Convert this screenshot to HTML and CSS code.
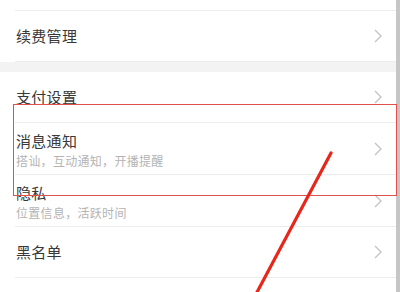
FILE: index.html
```html
<!DOCTYPE html>
<html lang="zh">
<head>
<meta charset="utf-8">
<link rel="stylesheet" href="styles.css">
</head>
<body>
<div class="screen">
  <div class="list">
    <div class="top-stub"></div>
    <div class="group">
      <div class="row"><span class="title">续费管理</span><svg class="chev" viewBox="0 0 8 14"><polyline points="1,1 7,7 1,13"/></svg></div>
    </div>
    <div class="gap"></div>
    <div class="group">
      <div class="row"><span class="title">支付设置</span><svg class="chev" viewBox="0 0 8 14"><polyline points="1,1 7,7 1,13"/></svg></div>
      <div class="row two"><div class="texts"><span class="title">消息通知</span><span class="sub">搭讪，互动通知，开播提醒</span></div><svg class="chev" viewBox="0 0 8 14"><polyline points="1,1 7,7 1,13"/></svg></div>
      <div class="row two"><div class="texts"><span class="title">隐私</span><span class="sub">位置信息，活跃时间</span></div><svg class="chev" viewBox="0 0 8 14"><polyline points="1,1 7,7 1,13"/></svg></div>
      <div class="row"><span class="title">黑名单</span><svg class="chev" viewBox="0 0 8 14"><polyline points="1,1 7,7 1,13"/></svg></div>
    </div>
  </div>
  <div class="edge"></div>
  <div class="highlight"></div>
  <svg class="arrow" viewBox="0 0 400 292" width="400" height="292"><line x1="331" y1="153" x2="255" y2="296"/></svg>
</div>
</body>
</html>
```
FILE: styles.css
```css
* { box-sizing: border-box; }
html, body { margin: 0; padding: 0; }
body { width: 400px; height: 292px; overflow: hidden; background: #fff; font-family: "Noto Sans CJK SC", "Noto Sans", sans-serif; }
.screen { position: relative; display: flex; width: 400px; height: 292px; }
.list { width: 396px; display: flex; flex-direction: column; }
.edge { width: 4px; background: #c6c6c6; }
.top-stub { height: 11px; margin-left: 15px; border-bottom: 1px solid #ececec; }
.gap { height: 10px; background: #f3f3f3; }
.row { height: 51px; margin-left: 15px; padding: 0 14px 0 1px; border-bottom: 1px solid #ececec; display: flex; align-items: center; justify-content: space-between; }
.row.two { height: 52px; }
.texts { display: flex; flex-direction: column; margin-top: 3px; }
.title { font-size: 15px; line-height: 20px; color: #383838; letter-spacing: 0.3px; }
.sub { font-size: 12px; line-height: 16px; color: #b4b4b4; margin-top: 2px; letter-spacing: 0.3px; }
.chev { width: 8px; height: 14px; fill: none; stroke: #c2c2c2; stroke-width: 1.3; }
.highlight { position: absolute; left: 13px; top: 104px; width: 384px; height: 92px; border: 1.5px solid #e0504f; }
.arrow { position: absolute; left: 0; top: 0; }
.arrow line { stroke: #e8271c; stroke-width: 3.2; stroke-linecap: round; }
```
